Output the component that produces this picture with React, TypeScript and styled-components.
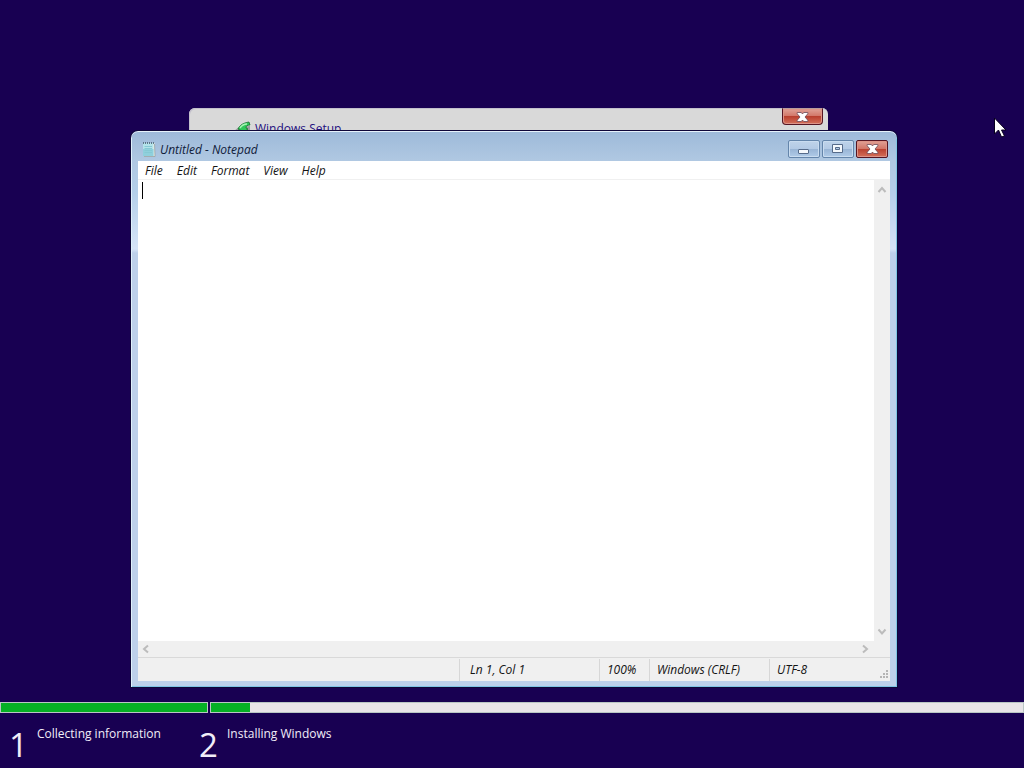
import React from 'react';
import styled, { createGlobalStyle, css } from 'styled-components';

const GlobalStyle = createGlobalStyle`
  *, *::before, *::after { box-sizing: border-box; }
  body {
    margin: 0;
    background: #180052;
    font-family: "Open Sans", "Noto Sans", sans-serif;
    font-size: 12px;
    line-height: 16px;
  }
  button, textarea { font: inherit; color: inherit; }
`;

const Screen = styled.div`
  display: flex;
  flex-direction: column;
  min-height: 100vh;
  overflow: hidden;
`;

const Desktop = styled.main`
  position: relative;
  flex: 1;
  min-height: 320px;
`;

const SetupWindow = styled.section`
  position: absolute;
  inset: 108px 196px 60px 189px;
  display: flex;
  justify-content: space-between;
  align-items: flex-start;
  padding: 0 5px 0 45px;
  border-radius: 6px 6px 0 0;
  background: #d9d9d9;
  box-shadow: inset 1px 1px 0 #c3c0cc;
`;

const SetupTitle = styled.h2`
  display: flex;
  align-items: center;
  gap: 4px;
  margin: 0;
  padding-top: 13px;
  font-size: 12px;
  font-weight: 400;
  color: #241080;
`;

const NotepadWindow = styled.section`
  position: absolute;
  inset: 131px 127px 15px 131px;
  display: flex;
  flex-direction: column;
  padding: 0 7px 6px;
  border-radius: 7px 7px 0 0;
  background:
    linear-gradient(#dff0fb, #dff0fb) left / 1px 100% no-repeat,
    linear-gradient(#7fc4e6, #7fc4e6) right / 1px 100% no-repeat,
    linear-gradient(#7fc4e6, #7fc4e6) bottom / 100% 1px no-repeat,
    linear-gradient(#9db9d9 0, #b0c8e2 30px, #b4cfe9 60px, #d6e4f7 118px, #bdd0ea 122px, #bdd0ea 100%);
  box-shadow: inset 0 1px 0 #e6f2fb, 0 0 0 1px #0e0638;
  font-style: italic;
  color: #141414;
`;

const TitleBar = styled.header`
  display: flex;
  align-items: center;
  height: 30px;
  padding: 6px 2px 0 4px;
`;

const WindowTitle = styled.h1`
  flex: 1;
  margin: 0 0 0 4px;
  padding-top: 2px;
  font-size: 12px;
  font-weight: 400;
  color: #10203a;
`;

const CaptionButtons = styled.div`
  display: flex;
  gap: 2px;
`;

const CaptionButton = styled.button<{ $close?: boolean; $hanging?: boolean }>`
  display: flex;
  align-items: center;
  justify-content: center;
  width: ${p => (p.$hanging ? 41 : 32)}px;
  height: ${p => (p.$hanging ? 17 : 18)}px;
  padding: 0;
  border: 1px solid #6485ab;
  border-radius: 2px;
  background: linear-gradient(#bfd3ea 0, #b3cae5 48%, #98b4d5 50%, #b0cbe8 100%);
  box-shadow: inset 0 0 0 1px #c9dcf0;
  ${p => p.$close && css`
    border-color: #551522;
    background: linear-gradient(#e0a196 0, #d27668 48%, #b9402f 50%, #d4705a 100%);
    box-shadow: inset 0 0 0 1px #dd9488;
  `}
  ${p => p.$hanging && css`
    border-top-color: #b79a9c;
    border-radius: 0 0 4px 4px;
  `}
`;

const MenuBar = styled.nav`
  display: flex;
  height: 19px;
  background: #ffffff;
  border-bottom: 1px solid #f0f0f0;
`;

const MenuItem = styled.button`
  padding: 2px 7px 0;
  border: 0;
  background: none;
  font-style: italic;
  line-height: 16px;
`;

const Editor = styled.div`
  display: grid;
  flex: 1;
  grid-template-columns: 1fr 16px;
  grid-template-rows: 1fr 16px;
  min-height: 0;
  background: #f0f0f0;
`;

const Page = styled.div`
  position: relative;
  display: flex;
`;

const TextInput = styled.textarea`
  flex: 1;
  padding: 2px 4px;
  border: 0;
  outline: 0;
  resize: none;
  background: #ffffff;
`;

const Caret = styled.span`
  position: absolute;
  top: 2px;
  left: 4px;
  width: 1px;
  height: 17px;
  background: #000000;
`;

const ScrollBar = styled.div<{ $vertical?: boolean }>`
  display: flex;
  flex-direction: ${p => (p.$vertical ? 'column' : 'row')};
  justify-content: space-between;
`;

const ScrollButton = styled.button`
  display: flex;
  align-items: center;
  justify-content: center;
  width: 16px;
  height: 18px;
  padding: 0;
  border: 0;
  background: none;

  ${ScrollBar}:last-child & { height: 16px; }
`;

const StatusBar = styled.footer`
  display: flex;
  height: 24px;
  padding-top: 1px;
  border-top: 1px solid #d9d9d9;
  background: #f0f0f0;
`;

const StatusCell = styled.span<{ $width?: number; $indent?: number }>`
  flex: ${p => (p.$width ? `0 0 ${p.$width}px` : '1')};
  padding-left: ${p => p.$indent ?? 7}px;
  border-left: 1px solid ${p => (p.$width ? '#d7d7d7' : 'transparent')};
  line-height: 22px;
`;

const Grip = styled.svg`
  align-self: flex-end;
  margin: 0 1px 2px 0;
`;

const Progress = styled.div`
  display: grid;
  grid-template-columns: 208fr 814fr;
  gap: 2px;
  height: 11px;
`;

const Segment = styled.div`
  border: 1px solid #b9c6c4;
  background: #e8e4e8;
`;

const Fill = styled.div`
  height: 100%;
  background: #06b025;
`;

const Steps = styled.ol`
  display: flex;
  height: 55px;
  margin: 0;
  padding: 0 9px;
  list-style: none;
  color: #f1edf8;
`;

const Step = styled.li`
  display: flex;
  width: 190px;
`;

const StepNumber = styled.span`
  width: 28px;
  padding-top: 16px;
  font-size: 33px;
  line-height: 32px;
`;

const StepLabel = styled.span`
  padding-top: 13px;
`;

const Pointer = styled.svg`
  position: absolute;
  top: 117px;
  right: 17px;
`;

const CloseGlyph = () => (
  <svg width="13" height="10" viewBox="0 0 13 10" aria-hidden="true">
    <path d="M1.200 .5h4.100l1.200 1.500L7.700 .5h4.100v1.300L9 5l2.800 3.200v1.300H7.700L6.500 8 5.300 9.500H1.200V8.200L4 5 1.200 1.800z" fill="#fff" stroke="#6b4a58" strokeWidth=".8" />
  </svg>
);

const MinimizeGlyph = () => (
  <svg width="12" height="10" viewBox="0 0 12 10" aria-hidden="true">
    <rect x=".5" y="5.500" width="10" height="4" rx=".5" fill="#f4f8fc" stroke="#566b8a" />
  </svg>
);

const MaximizeGlyph = () => (
  <svg width="12" height="10" viewBox="0 0 12 10" aria-hidden="true">
    <path d="M.5 .5h10v8H.5zM3.500 3.500v2h4v-2z" fill="#f4f8fc" fillRule="evenodd" stroke="#566b8a" />
  </svg>
);

const NotepadIcon = () => (
  <svg width="14" height="16" viewBox="0 0 14 16" aria-hidden="true">
    <path d="M2 2h10.500l.5 13.500H2z" fill="#f3f1e4" />
    <path d="M12.500 3l.5 12.500H2" fill="none" stroke="#8f9a9c" strokeWidth=".7" />
    <path d="M1 2h10.500v13H1z" fill="#b4e3ea" />
    <path d="M1 8h10.500v7H1z" fill="#8fd0dc" />
    <path d="M2.500 5.500h7.500M2.500 7.500h7.500M2.500 9.500h7.500M2.500 11.500h7.500" stroke="#86c9d4" />
    <path d="M1.500 1v2M3.500 1v2M5.500 1v2M7.500 1v2M9.500 1v2M11.500 1v2" stroke="#4a5f70" strokeWidth=".8" />
  </svg>
);

const SetupIcon = () => (
  <svg width="17" height="16" viewBox="0 0 17 16" aria-hidden="true">
    <path d="M0 10l5-4 11-1v10H0z" fill="#9a9ca0" />
    <path d="M4 8c2-4 5-6 11-7l1 3c-3 0-4 1-4 3l2 1-4 3z" fill="#2fc75a" stroke="#17702c" strokeWidth=".8" />
    <path d="M6 7c2-3 4-4 7-4" stroke="#a5f5b4" strokeWidth="1.500" fill="none" />
  </svg>
);

const arrows = {
  up: 'M2.500 9l3.500-4 3.500 4',
  down: 'M2.500 3.500l3.500 4 3.500-4',
  left: 'M8 2.500l-4 3.500 4 3.500',
  right: 'M3 2.500l4 3.500-4 3.500',
};

const ScrollArrow = ({ direction }: { direction: keyof typeof arrows }) => (
  <ScrollButton type="button" aria-label={`Scroll ${direction}`}>
    <svg width="12" height="12" viewBox="0 0 12 12" fill="none" stroke="#bcbcbc" strokeWidth="2" aria-hidden="true">
      <path d={arrows[direction]} />
    </svg>
  </ScrollButton>
);

const menus = ['File', 'Edit', 'Format', 'View', 'Help'];
const steps = ['Collecting information', 'Installing Windows'];
const progress = [100, 4.8];

export default function App() {
  return (
    <Screen>
      <GlobalStyle />
      <Desktop>
        <SetupWindow>
          <SetupTitle><SetupIcon />Windows Setup</SetupTitle>
          <CaptionButton type="button" $close $hanging aria-label="Close setup"><CloseGlyph /></CaptionButton>
        </SetupWindow>
        <NotepadWindow>
          <TitleBar>
            <NotepadIcon />
            <WindowTitle>Untitled - Notepad</WindowTitle>
            <CaptionButtons>
              <CaptionButton type="button" aria-label="Minimize"><MinimizeGlyph /></CaptionButton>
              <CaptionButton type="button" aria-label="Maximize"><MaximizeGlyph /></CaptionButton>
              <CaptionButton type="button" $close aria-label="Close"><CloseGlyph /></CaptionButton>
            </CaptionButtons>
          </TitleBar>
          <MenuBar>
            {menus.map(name => <MenuItem type="button" key={name}>{name}</MenuItem>)}
          </MenuBar>
          <Editor>
            <Page>
              <TextInput aria-label="Text editor" spellCheck={false} />
              <Caret />
            </Page>
            <ScrollBar $vertical>
              <ScrollArrow direction="up" />
              <ScrollArrow direction="down" />
            </ScrollBar>
            <ScrollBar>
              <ScrollArrow direction="left" />
              <ScrollArrow direction="right" />
            </ScrollBar>
          </Editor>
          <StatusBar>
            <StatusCell />
            <StatusCell $width={140} $indent={10}>Ln 1, Col 1</StatusCell>
            <StatusCell $width={50}>100%</StatusCell>
            <StatusCell $width={120}>Windows (CRLF)</StatusCell>
            <StatusCell $width={111}>UTF-8</StatusCell>
            <Grip width="9" height="9" viewBox="0 0 9 9" fill="#b5b5b5" aria-hidden="true">
              <path d="M6 0h2v2H6zM3 3h2v2H3zM6 3h2v2H6zM0 6h2v2H0zM3 6h2v2H3zM6 6h2v2H6z" />
            </Grip>
          </StatusBar>
        </NotepadWindow>
        <Pointer width="14" height="22" viewBox="0 0 14 22" aria-hidden="true">
          <path d="M1.500 1v16l4-4 3 7 3-1-3-6h4.500z" fill="#fff" stroke="#08001f" />
        </Pointer>
      </Desktop>
      <Progress>
        {progress.map((value, i) => (
          <Segment key={steps[i]} role="progressbar" aria-label={steps[i]} aria-valuenow={value}>
            <Fill style={{ width: `${value}%` }} />
          </Segment>
        ))}
      </Progress>
      <Steps>
        {steps.map((label, i) => (
          <Step key={label}>
            <StepNumber>{i + 1}</StepNumber>
            <StepLabel>{label}</StepLabel>
          </Step>
        ))}
      </Steps>
    </Screen>
  );
}
